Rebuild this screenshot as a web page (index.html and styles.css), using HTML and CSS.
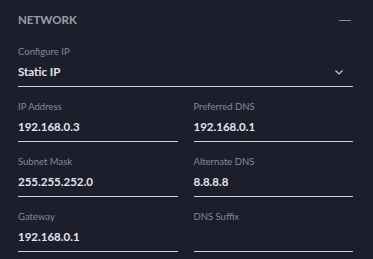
FILE: index.html
```html
<!DOCTYPE html>
<html>
<head>
<meta charset="utf-8">
<link rel="stylesheet" href="styles.css">
</head>
<body>
<section class="panel">
  <header class="panel-head">
    <h2 class="panel-title">NETWORK</h2>
    <span class="collapse"></span>
  </header>
  <div class="fields">
    <div class="field wide">
      <div class="label">Configure IP</div>
      <div class="value select">
        <span>Static IP</span>
        <svg class="chev" width="8" height="5" viewBox="0 0 8 5"><polyline points="0.5,0.5 4,4 7.5,0.5" fill="none" stroke="#c9cbd4" stroke-width="1.2"/></svg>
      </div>
    </div>
    <div class="field">
      <div class="label">IP Address</div>
      <div class="value">192.168.0.3</div>
    </div>
    <div class="field">
      <div class="label">Preferred DNS</div>
      <div class="value">192.168.0.1</div>
    </div>
    <div class="field">
      <div class="label">Subnet Mask</div>
      <div class="value">255.255.252.0</div>
    </div>
    <div class="field">
      <div class="label">Alternate DNS</div>
      <div class="value">8.8.8.8</div>
    </div>
    <div class="field">
      <div class="label">Gateway</div>
      <div class="value">192.168.0.1</div>
    </div>
    <div class="field">
      <div class="label">DNS Suffix</div>
      <div class="value"></div>
    </div>
  </div>
</section>
</body>
</html>
```

FILE: styles.css
```css
html, body {
  margin: 0;
  padding: 0;
  background: #1c1e2b;
}
body {
  font-family: Lato, "Liberation Sans", sans-serif;
  width: 373px;
  height: 259px;
  overflow: hidden;
}
.panel {
  padding: 12px 20px 0 18px;
}
.panel-head {
  display: flex;
  align-items: center;
  justify-content: space-between;
  height: 16px;
}
.panel-title {
  margin: 0;
  font-size: 11.5px;
  line-height: 16px;
  font-weight: 700;
  color: #9c9eaa;
}
.collapse {
  display: block;
  width: 12px;
  height: 1px;
  background: #8e909c;
  margin-right: 2px;
}
.fields {
  margin-top: 18px;
  display: grid;
  grid-template-columns: 1fr 1fr;
  column-gap: 16px;
  row-gap: 14px;
}
.field {
  border-bottom: 1px solid #cfd1da;
  padding-bottom: 6px;
}
.field.wide {
  grid-column: 1 / 3;
}
.label {
  font-size: 9.5px;
  line-height: 12px;
  color: #878995;
  margin-bottom: 6px;
}
.value {
  font-size: 11.5px;
  line-height: 16px;
  height: 16px;
  font-weight: 700;
  color: #e4e5eb;
}
.select {
  display: flex;
  align-items: center;
  justify-content: space-between;
}
.chev {
  margin-right: 10px;
}
```
